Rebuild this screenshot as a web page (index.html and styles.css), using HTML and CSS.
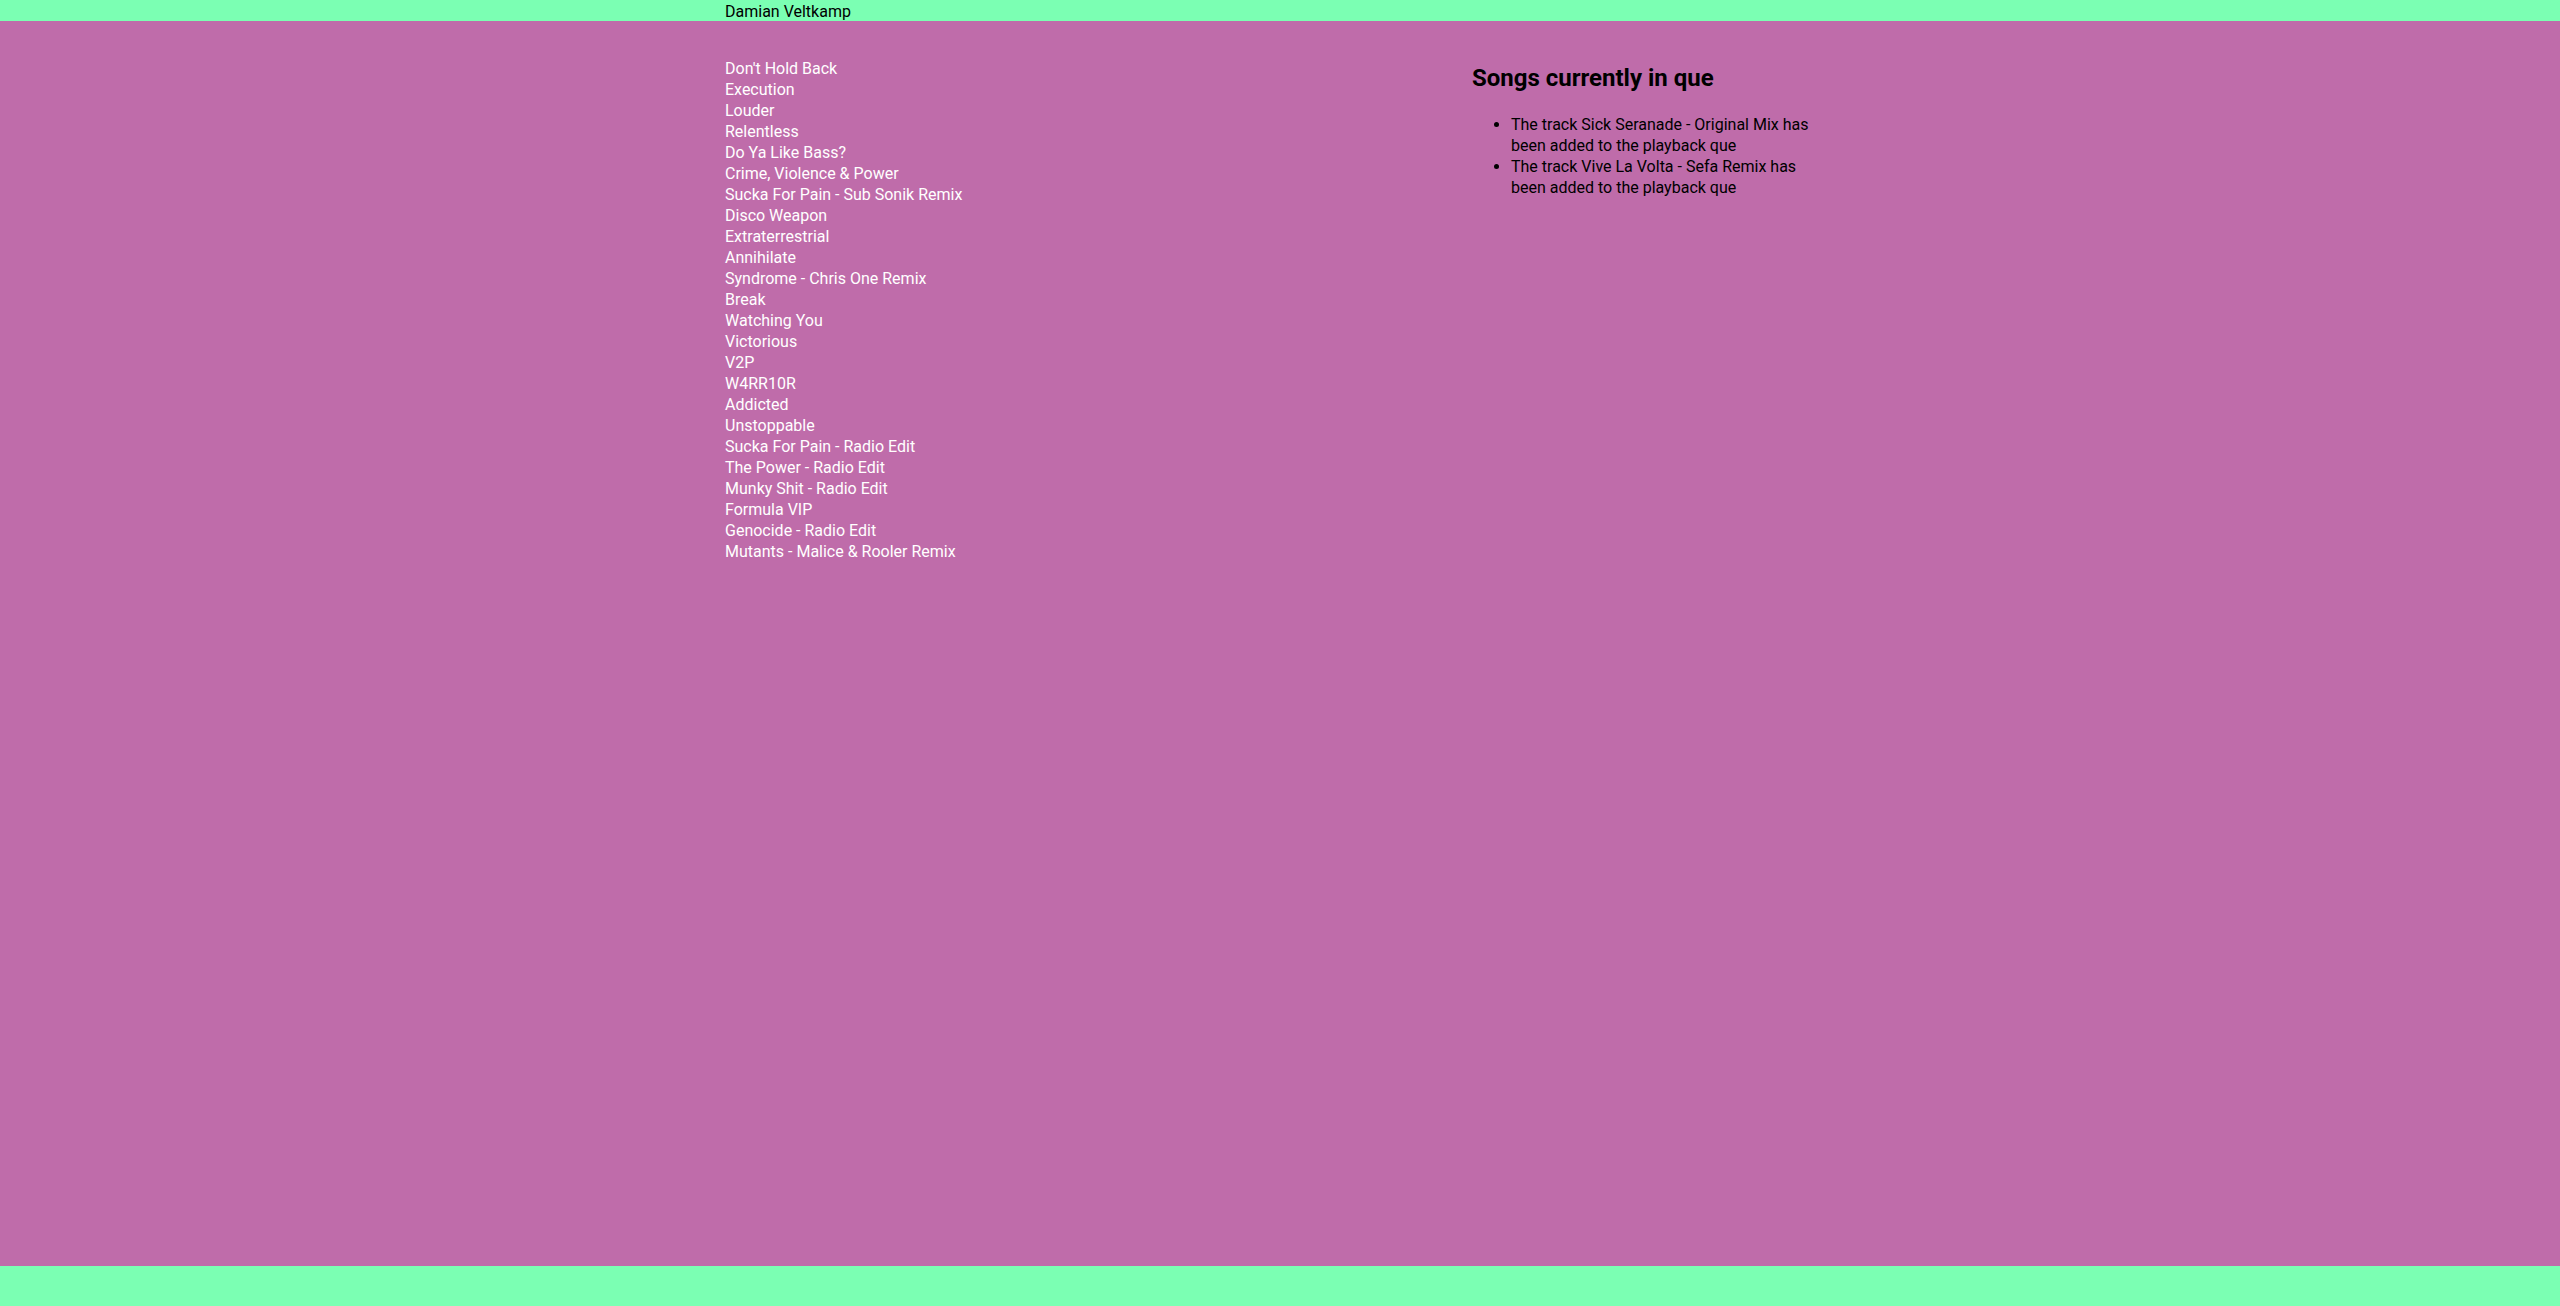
FILE: index.html
```html
<!DOCTYPE html>
<html lang="en">
<head>
<meta charset="utf-8">
<title>Damian Veltkamp</title>
<link rel="stylesheet" href="styles.css">
</head>
<body>
<div class="page">
  <header class="topbar">
    <div class="container">Damian Veltkamp</div>
  </header>
  <main class="main">
    <div class="container row">
      <section class="tracks">
        <ul class="track-list">
          <li>Don't Hold Back</li>
          <li>Execution</li>
          <li>Louder</li>
          <li>Relentless</li>
          <li>Do Ya Like Bass?</li>
          <li>Crime, Violence &amp; Power</li>
          <li>Sucka For Pain - Sub Sonik Remix</li>
          <li>Disco Weapon</li>
          <li>Extraterrestrial</li>
          <li>Annihilate</li>
          <li>Syndrome - Chris One Remix</li>
          <li>Break</li>
          <li>Watching You</li>
          <li>Victorious</li>
          <li>V2P</li>
          <li>W4RR10R</li>
          <li>Addicted</li>
          <li>Unstoppable</li>
          <li>Sucka For Pain - Radio Edit</li>
          <li>The Power - Radio Edit</li>
          <li>Munky Shit - Radio Edit</li>
          <li>Formula VIP</li>
          <li>Genocide - Radio Edit</li>
          <li>Mutants - Malice &amp; Rooler Remix</li>
        </ul>
      </section>
      <aside class="queue">
        <h2 class="queue-title">Songs currently in que</h2>
        <ul class="queue-list">
          <li>The track Sick Seranade - Original Mix has been added to the playback que</li>
          <li>The track Vive La Volta - Sefa Remix has been added to the playback que</li>
        </ul>
      </aside>
    </div>
  </main>
  <footer class="footer"></footer>
</div>
</body>
</html>
```

FILE: styles.css
```css
html, body {
  margin: 0;
  padding: 0;
}

body {
  font-family: Roboto, "Liberation Sans", Arial, sans-serif;
  font-size: 16px;
  color: #000;
  background: #bf6caa;
}

.page {
  min-height: 100vh;
  display: flex;
  flex-direction: column;
}

.container {
  width: 1110px;
  margin: 0 auto;
}

.topbar {
  background: #7bffb3;
  box-sizing: border-box;
  height: 21px;
  padding-top: 1px;
  line-height: 21px;
}

.main {
  flex: 1;
  background: #bf6caa;
}

.row {
  display: flex;
}

.tracks {
  width: 746px;
  padding-top: 37px;
}

.track-list {
  list-style: none;
  margin: 0;
  padding: 0;
  color: #fff;
}

.track-list li {
  line-height: 21px;
}

.queue {
  width: 350px;
  padding-top: 43px;
}

.queue-title {
  font-size: 24px;
  font-weight: 700;
  line-height: 28px;
  margin: 0 0 22px;
  padding-left: 1px;
}

.queue-list {
  margin: 0;
  padding: 0 0 0 40px;
}

.queue-list li {
  line-height: 21px;
}

.footer {
  height: 40px;
  background: #7bffb3;
}
```
